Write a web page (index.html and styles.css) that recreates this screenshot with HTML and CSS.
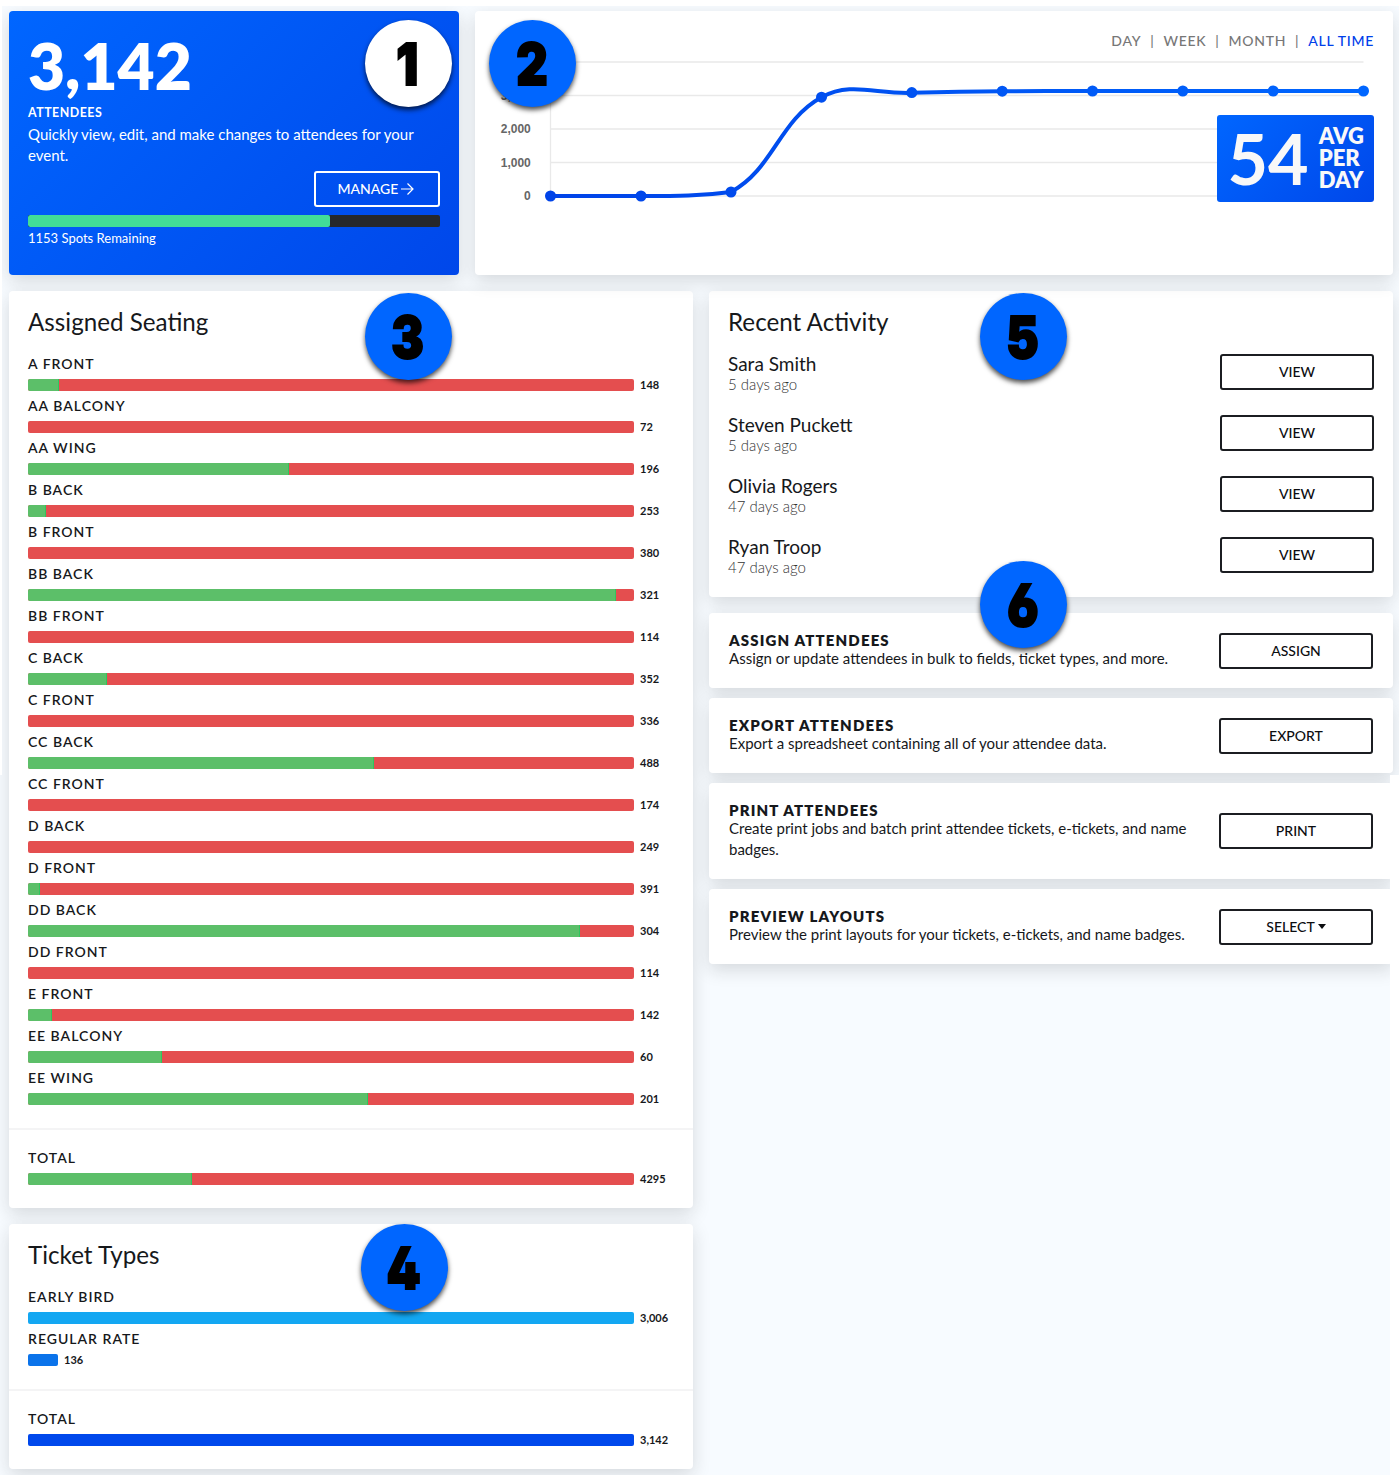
FILE: index.html
```html
<!DOCTYPE html>
<html lang="en">
<head>
  <meta charset="UTF-8">
  <title>Attendees Overview</title>
  <link rel="stylesheet" href="styles.css">
</head>
<body>
  <div class="dashboard">

    <div class="row top-row">
      <div class="card attendees">
        <div class="big-number">3,142</div>
        <div class="attendees-label">ATTENDEES</div>
        <p class="attendees-text">Quickly view, edit, and make changes to attendees for your event.</p>
        <a class="btn btn-white">MANAGE
          <svg class="arrow" viewBox="0 0 14 14"><path d="M1 7h12M7.5 1.5L13 7l-5.500 5.500"/></svg>
        </a>
        <div class="capacity"><div class="capacity-fill" style="width: 73.2%"></div></div>
        <div class="spots">1153 Spots Remaining</div>
      </div>

      <div class="card chart-card">
        <div class="range">
          <a>DAY</a><span>|</span><a>WEEK</a><span>|</span><a>MONTH</a><span>|</span><a class="active">ALL TIME</a>
        </div>
        <svg class="chart" viewBox="0 0 880 160">
          <defs>
            <linearGradient id="line" gradientUnits="userSpaceOnUse" x1="56" y1="0" x2="870" y2="0">
              <stop offset="0" stop-color="#0043e8"/>
              <stop offset="1" stop-color="#0066ff"/>
            </linearGradient>
          </defs>
          <g class="grid">
            <path d="M56.500 10H869.500M56.500 43.500H869.500M56.500 77H869.500M56.500 110.500H869.500M56.500 144H869.500M56.500 10V144"/>
          </g>
          <g class="ticks">
            <text x="36.800" y="48">3,000</text>
            <text x="36.800" y="81">2,000</text>
            <text x="36.800" y="114.500">1,000</text>
            <text x="36.800" y="148">0</text>
          </g>
          <path class="line" stroke="url(#line)" d="M56.500 144C92.600 144 111 144 147 144C183 144 207.500 144 237 140C279.800 116.700 284.600 69 327.500 45.300C357 29.300 381.600 42.200 417.800 40.800C454 39.800 472 39.400 508.200 39.200C544 39 562 39 598.600 39H869.500"/>
          <g class="dots">
            <path stroke="url(#line)" d="M56.500 144h.01M147 144h.01M237 140h.01M327.500 45.200h.01M417.800 40.600h.01M508.200 39.200h.01M598.500 39h.01M688.800 39h.01M779.200 39h.01M869.500 39h.01"/>
          </g>
        </svg>
        <div class="average">
          <div class="average-number">54</div>
          <div class="average-text">AVG<br>PER<br>DAY</div>
        </div>
      </div>
    </div>

    <div class="row">
      <div class="column">
        <div class="card stats">
          <h2>Assigned Seating</h2>
          <div class="stat"><div class="stat-name">A FRONT</div><div class="stat-line"><div class="bar red"><div class="green" style="width: 5.1%"></div></div><span>148</span></div></div>
          <div class="stat"><div class="stat-name">AA BALCONY</div><div class="stat-line"><div class="bar red"></div><span>72</span></div></div>
          <div class="stat"><div class="stat-name">AA WING</div><div class="stat-line"><div class="bar red"><div class="green" style="width: 43%"></div></div><span>196</span></div></div>
          <div class="stat"><div class="stat-name">B BACK</div><div class="stat-line"><div class="bar red"><div class="green" style="width: 3%"></div></div><span>253</span></div></div>
          <div class="stat"><div class="stat-name">B FRONT</div><div class="stat-line"><div class="bar red"></div><span>380</span></div></div>
          <div class="stat"><div class="stat-name">BB BACK</div><div class="stat-line"><div class="bar red"><div class="green" style="width: 97.1%"></div></div><span>321</span></div></div>
          <div class="stat"><div class="stat-name">BB FRONT</div><div class="stat-line"><div class="bar red"></div><span>114</span></div></div>
          <div class="stat"><div class="stat-name">C BACK</div><div class="stat-line"><div class="bar red"><div class="green" style="width: 13.1%"></div></div><span>352</span></div></div>
          <div class="stat"><div class="stat-name">C FRONT</div><div class="stat-line"><div class="bar red"></div><span>336</span></div></div>
          <div class="stat"><div class="stat-name">CC BACK</div><div class="stat-line"><div class="bar red"><div class="green" style="width: 57.1%"></div></div><span>488</span></div></div>
          <div class="stat"><div class="stat-name">CC FRONT</div><div class="stat-line"><div class="bar red"></div><span>174</span></div></div>
          <div class="stat"><div class="stat-name">D BACK</div><div class="stat-line"><div class="bar red"></div><span>249</span></div></div>
          <div class="stat"><div class="stat-name">D FRONT</div><div class="stat-line"><div class="bar red"><div class="green" style="width: 2%"></div></div><span>391</span></div></div>
          <div class="stat"><div class="stat-name">DD BACK</div><div class="stat-line"><div class="bar red"><div class="green" style="width: 91.1%"></div></div><span>304</span></div></div>
          <div class="stat"><div class="stat-name">DD FRONT</div><div class="stat-line"><div class="bar red"></div><span>114</span></div></div>
          <div class="stat"><div class="stat-name">E FRONT</div><div class="stat-line"><div class="bar red"><div class="green" style="width: 4%"></div></div><span>142</span></div></div>
          <div class="stat"><div class="stat-name">EE BALCONY</div><div class="stat-line"><div class="bar red"><div class="green" style="width: 22.1%"></div></div><span>60</span></div></div>
          <div class="stat"><div class="stat-name">EE WING</div><div class="stat-line"><div class="bar red"><div class="green" style="width: 56.1%"></div></div><span>201</span></div></div>
          <div class="total">
            <div class="stat"><div class="stat-name">TOTAL</div><div class="stat-line"><div class="bar red"><div class="green" style="width: 27.1%"></div></div><span>4295</span></div></div>
          </div>
        </div>

        <div class="card stats">
          <h2>Ticket Types</h2>
          <div class="stat"><div class="stat-name">EARLY BIRD</div><div class="stat-line"><div class="bar sky"></div><span>3,006</span></div></div>
          <div class="stat"><div class="stat-name">REGULAR RATE</div><div class="stat-line"><div class="bar blue" style="width: 30px"></div><span>136</span></div></div>
          <div class="total">
            <div class="stat"><div class="stat-name">TOTAL</div><div class="stat-line"><div class="bar navy"></div><span>3,142</span></div></div>
          </div>
        </div>
      </div>

      <div class="column">
        <div class="card activity">
          <h2>Recent Activity</h2>
          <div class="person"><div><div class="name">Sara Smith</div><div class="when">5 days ago</div></div><a class="btn">VIEW</a></div>
          <div class="person"><div><div class="name">Steven Puckett</div><div class="when">5 days ago</div></div><a class="btn">VIEW</a></div>
          <div class="person"><div><div class="name">Olivia Rogers</div><div class="when">47 days ago</div></div><a class="btn">VIEW</a></div>
          <div class="person"><div><div class="name">Ryan Troop</div><div class="when">47 days ago</div></div><a class="btn">VIEW</a></div>
        </div>

        <div class="actions">
          <div class="card action">
            <div class="action-text"><h3>ASSIGN ATTENDEES</h3><p>Assign or update attendees in bulk to fields, ticket types, and more.</p></div>
            <a class="btn">ASSIGN</a>
          </div>
          <div class="card action">
            <div class="action-text"><h3>EXPORT ATTENDEES</h3><p>Export a spreadsheet containing all of your attendee data.</p></div>
            <a class="btn">EXPORT</a>
          </div>
          <div class="card action">
            <div class="action-text"><h3>PRINT ATTENDEES</h3><p>Create print jobs and batch print attendee tickets, e-tickets, and name badges.</p></div>
            <a class="btn">PRINT</a>
          </div>
          <div class="card action">
            <div class="action-text"><h3>PREVIEW LAYOUTS</h3><p>Preview the print layouts for your tickets, e-tickets, and name badges.</p></div>
            <a class="btn">SELECT<i class="caret"></i></a>
          </div>
        </div>
      </div>
    </div>

    <!-- numbered markers -->
    <div class="marker marker-1"><span>1</span></div>
    <div class="marker marker-2"><span>2</span></div>
    <div class="marker marker-3"><span>3</span></div>
    <div class="marker marker-4"><span>4</span></div>
    <div class="marker marker-5"><span>5</span></div>
    <div class="marker marker-6"><span>6</span></div>
  </div>
</body>
</html>
```

FILE: styles.css
```css
* { margin: 0; padding: 0; box-sizing: border-box; }
body {
  background: #fff;
  font-family: Lato, "Liberation Sans", sans-serif;
  color: #16181b;
}
.dashboard {
  position: relative;
  width: 1399px;
  height: 1484px;
  padding: 11px 6px 0 9px;
  background: #f7fbff;
  overflow: hidden;
  /* the lower half is a little narrower than the upper one */
  clip-path: polygon(2px 6px, 1399px 6px, 1399px 775px, 1390px 775px, 1390px 1475px, 0 1475px, 0 775px, 2px 775px);
}
.row {
  display: flex;
  gap: 16px;
  align-items: flex-start;
}
.top-row {
  align-items: stretch;
  height: 264px;
  margin-bottom: 16px;
}
.column {
  flex: 1;
  min-width: 0;
  display: flex;
  flex-direction: column;
  gap: 16px;
}
.card {
  background: #fff;
  border-radius: 4px;
  box-shadow: 0 6px 18px rgba(30, 30, 30, 0.15);
}
h2 {
  font-size: 24.2px;
  font-weight: 400;
  line-height: 28px;
}

.btn {
  display: flex;
  align-items: center;
  justify-content: center;
  flex: none;
  width: 154px;
  height: 36px;
  padding-bottom: 1px;
  border: 2px solid #1b1d21;
  border-radius: 3px;
  font-size: 14px;
  font-weight: 500;
  color: #0c0d10;
}
.btn-white {
  width: 126px;
  margin-left: auto;
  padding-right: 3px;
  border-color: #fff;
  color: #fff;
}
.arrow {
  width: 14px;
  height: 14px;
  margin-left: 2px;
  fill: none;
  stroke: #fff;
  stroke-width: 1.2;
}
.caret {
  margin-left: 3px;
  border: 4.5px solid transparent;
  border-top: 5px solid #0c0d10;
  border-bottom: 0;
}

/* attendees */
.attendees {
  flex: none;
  width: 450.4px;
  padding: 19px;
  background: linear-gradient(135deg, #06f, #0047ea);
  color: #fff;
}
.big-number {
  font-size: 64px;
  font-weight: 800;
  line-height: 71px;
}
.attendees-label {
  font-size: 12.4px;
  font-weight: 700;
  letter-spacing: 0.5px;
  line-height: 23px;
}
.attendees-text {
  margin-bottom: 5px;
  font-size: 15px;
  line-height: 21px;
}
.capacity {
  height: 12px;
  margin-top: 8px;
  border-radius: 2px;
  background: #26282c;
  overflow: hidden;
}
.capacity-fill {
  height: 12px;
  border-radius: 2px;
  background: #42dd97;
}
.spots {
  font-size: 13px;
  line-height: 23px;
}

/* chart */
.chart-card {
  position: relative;
  flex: 1;
  min-width: 0;
  padding: 19px;
}
.range {
  display: flex;
  justify-content: flex-end;
  gap: 9px;
  font-size: 14px;
  font-weight: 500;
  letter-spacing: 0.7px;
  line-height: 22px;
  color: #777;
}
.range .active { color: #0040ea; }
.chart {
  display: block;
  width: 880px;
  height: 160px;
  overflow: visible;
}
.grid path { fill: none; stroke: #e9e9e9; stroke-width: 1.3; }
.ticks text {
  font: bold 12px "Liberation Sans", sans-serif;
  fill: #666;
  text-anchor: end;
}
.line { fill: none; stroke-width: 4; }
.dots path { stroke-width: 11; stroke-linecap: round; }
.average {
  position: absolute;
  top: 104px;
  right: 19px;
  display: flex;
  align-items: center;
  width: 157.5px;
  height: 87px;
  padding: 0 0 1px 11px;
  gap: 10px;
  border-radius: 3px;
  background: linear-gradient(135deg, #06f, #0047ea);
  color: #f8f8f8;
}
.average-number {
  padding-bottom: 1px;
  font-size: 70px;
  font-weight: 700;
  line-height: 80px;
}
.average-text {
  font-size: 22px;
  font-weight: 800;
  line-height: 22px;
}

/* seating and ticket bars */
.stats { padding: 17px 0 23px; }
.stats h2 { margin: 0 19px 18px; }
.stat { padding: 0 19px; }
.stat-name {
  font-size: 14px;
  font-weight: 600;
  letter-spacing: 1px;
  line-height: 20px;
}
.stat-line {
  display: flex;
  align-items: center;
  gap: 6px;
  height: 12px;
  margin: 5px 0;
  font-size: 11px;
  font-weight: 700;
  line-height: 12px;
}
.stat-line span { padding-bottom: 1px; }
.bar {
  width: 606px;
  height: 12px;
  border-radius: 2px;
  overflow: hidden;
}
.red { background: #e44e4f; }
.sky { background: #13a7f2; }
.blue { background: #0b73ea; }
.navy { background: #0048ec; }
.green {
  height: 12px;
  background: #5cbf69;
  border-right: 1px solid #2fc75f;
}
.total {
  margin-top: 23px;
  padding-top: 18px;
  border-top: 2px solid #f4f4f5;
}
.total .stat-line { margin-bottom: 0; }

/* recent activity */
.activity {
  height: 306px;
  padding: 17px 19px;
}
.activity h2 { margin-bottom: 18px; }
.person {
  display: flex;
  justify-content: space-between;
  height: 61px;
}
.name {
  font-size: 19px;
  line-height: 20px;
}
.when {
  font-size: 15px;
  font-weight: 300;
  line-height: 20px;
  color: #333;
}

.actions {
  display: flex;
  flex-direction: column;
  gap: 10px;
}
.action {
  display: flex;
  align-items: center;
  justify-content: space-between;
  padding: 19px 20px;
}
.action-text { width: 470px; }
.action h3 {
  font-size: 15px;
  font-weight: 800;
  letter-spacing: 1.15px;
  line-height: 16px;
}
.action p {
  font-size: 15px;
  line-height: 21px;
}

.marker {
  position: absolute;
  display: flex;
  align-items: center;
  justify-content: center;
  width: 87px;
  height: 87px;
  border-radius: 50%;
  background: #06f;
  box-shadow: 0 3px 5px rgba(0, 0, 0, 0.7);
  color: #000;
  font-family: Inter, Roboto, sans-serif;
  font-size: 58px;
  font-weight: 900;
  /* open four and open six */
  font-feature-settings: "cv02", "cv03";
}
.marker span {
  transform: scaleX(0.84);
  padding-right: 2px;
  -webkit-text-stroke: 2px #000;
}
.marker-1 { left: 365px; top: 20px; background: #fff; }
.marker-2 { left: 489px; top: 20px; }
.marker-3 { left: 365px; top: 293px; }
.marker-4 { left: 361px; top: 1224px; }
.marker-5 { left: 980px; top: 293px; }
.marker-6 { left: 980px; top: 561px; }
```
